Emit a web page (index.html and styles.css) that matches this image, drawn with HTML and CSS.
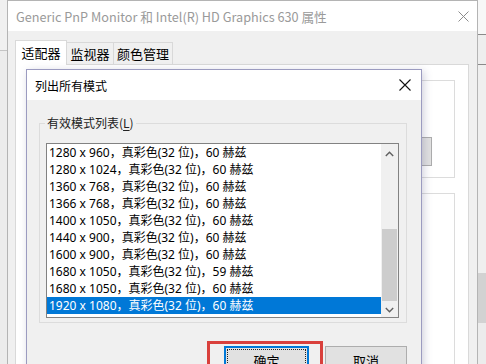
FILE: index.html
```html
<!DOCTYPE html>
<html lang="zh-CN">
<head>
  <meta charset="UTF-8" />
  <title>列出所有模式</title>
  <link rel="stylesheet" href="styles.css">
</head>
<body>

  <div class="side-left"></div>

  <div class="window">
    <div class="titlebar">
      <span class="title">Generic PnP Monitor 和 Intel(R) HD Graphics 630 属性</span>
      <svg class="close" width="11" height="11" viewBox="0 0 11 11"><path d="M0.5 0.5 L10.5 10.5 M10.5 0.5 L0.5 10.5" stroke="#8c8c8c" stroke-width="1" fill="none"/></svg>
    </div>
    <div class="winbody">
      <div class="tabs">
        <div class="tab active">适配器</div>
        <div class="tab">监视器</div>
        <div class="tab">颜色管理</div>
      </div>
      <div class="panel">
        <div class="pgroup g1"><div class="pbtn"></div></div>
        <div class="pgroup g2"></div>
      </div>
    </div>
  </div>

  <div class="side-right"></div>

  <!-- modal dialog on top of the properties window -->
  <div class="dialog">
    <div class="dlg-title">
      <span>列出所有模式</span>
      <svg class="close" width="12" height="12" viewBox="0 0 12 12"><path d="M0.5 0.5 L11.5 11.5 M11.5 0.5 L0.5 11.5" stroke="#111" stroke-width="1.1" fill="none"/></svg>
    </div>
    <div class="dlg-body">
      <div class="group">
        <span class="group-label">有效模式列表(<u>L</u>)</span>
        <div class="listbox">
          <ul class="items">
            <li>1280 x 960，真彩色(32 位)，60 赫兹</li>
            <li>1280 x 1024，真彩色(32 位)，60 赫兹</li>
            <li>1360 x 768，真彩色(32 位)，60 赫兹</li>
            <li>1366 x 768，真彩色(32 位)，60 赫兹</li>
            <li>1400 x 1050，真彩色(32 位)，60 赫兹</li>
            <li>1440 x 900，真彩色(32 位)，60 赫兹</li>
            <li>1600 x 900，真彩色(32 位)，60 赫兹</li>
            <li>1680 x 1050，真彩色(32 位)，59 赫兹</li>
            <li>1680 x 1050，真彩色(32 位)，60 赫兹</li>
            <li class="selected">1920 x 1080，真彩色(32 位)，60 赫兹</li>
          </ul>
          <div class="scrollbar">
            <svg class="arrow up" width="9" height="6" viewBox="0 0 9 6"><path d="M0.8 5 L4.5 1.3 L8.2 5" stroke="#606060" stroke-width="1.4" fill="none"/></svg>
            <div class="track"><div class="thumb"></div></div>
            <svg class="arrow down" width="9" height="6" viewBox="0 0 9 6"><path d="M0.8 1 L4.5 4.7 L8.2 1" stroke="#606060" stroke-width="1.4" fill="none"/></svg>
          </div>
        </div>
      </div>
      <div class="buttons">
        <div class="btn default">
          <span class="focus">确定</span>
          <div class="mark"></div>
        </div>
        <div class="btn">取消</div>
      </div>
    </div>
  </div>

</body>
</html>
```

FILE: styles.css
```css
body {
  margin: 0;
  width: 486px;
  height: 364px;
  overflow: hidden;
  position: relative;
  display: flex;
  background: #f0f0f0;
  font-family: "Noto Sans CJK SC", "Noto Sans", sans-serif;
  color: #000;
}
.side-left {
  width: 7px;
  flex: none;
  background: linear-gradient(#f0f0f0 0 50px, #c4c4c4 50px 51px, #ececec 51px);
}
.side-right {
  flex: 1;
  background: linear-gradient(#f7f7f7 0 34px, #8a8a8a 34px 35px, #eeeeee 35px 64px, #8a8a8a 64px 65px, #efefef 65px 273px, #d2d2d2 273px 323px, #ececec 323px);
}
.window {
  width: 471px;
  flex: none;
  box-sizing: border-box;
  border: 1px solid #b4b4b4;
  border-bottom: none;
  background: #f0f0f0;
  display: flex;
  flex-direction: column;
}
.titlebar {
  height: 30px;
  background: #fff;
  display: flex;
  align-items: center;
  justify-content: space-between;
  padding: 0 8px;
}
.title {
  font-size: 12.7px;
  color: #9a9a9a;
  white-space: nowrap;
}
.winbody {
  flex: 1;
  padding: 9px 8px 0 7px;
  display: flex;
  flex-direction: column;
}
.tabs {
  display: flex;
  align-items: flex-end;
  height: 25px;
  margin-bottom: -1px;
  position: relative;
  z-index: 1;
}
.tab {
  height: 23px;
  box-sizing: border-box;
  border: 1px solid #d9d9d9;
  border-left: none;
  background: #f0f0f0;
  font-size: 13px;
  line-height: 21px;
  width: 47px;
  text-align: center;
  white-space: nowrap;
}
.tab:last-child {
  width: 59px;
}
.tab.active {
  height: 25px;
  width: 52px;
  border-left: 1px solid #d9d9d9;
  border-bottom: none;
  background: #fff;
  line-height: 24px;
}
.panel {
  flex: 1;
  background: #fff;
  border: 1px solid #d9d9d9;
  border-bottom: none;
  padding: 15px 13px 0 12px;
  display: flex;
  flex-direction: column;
  gap: 15px;
}
.pgroup {
  border: 1px solid #dcdcdc;
}
.g1 {
  height: 96px;
  display: flex;
  justify-content: flex-end;
  align-items: flex-start;
}
.pbtn {
  width: 60px;
  height: 27px;
  margin: 56px 22px 0 0;
  background: #e1e1e1;
  border: 1px solid #adadad;
}
.g2 {
  flex: 1;
  border-bottom: none;
}

/* dialog */
.dialog {
  position: absolute;
  left: 26px;
  top: 69px;
  width: 396px;
  height: 310px;
  box-sizing: border-box;
  border: 1px solid #9b9bc0;
  background: #f0f0f0;
  box-shadow: 2px 2px 8px rgba(70, 70, 120, 0.25);
  z-index: 5;
  display: flex;
  flex-direction: column;
}
.dlg-title {
  height: 30px;
  background: #fff;
  display: flex;
  align-items: center;
  justify-content: space-between;
  padding: 0 10px 0 8px;
  font-size: 12px;
}
.dlg-body {
  padding: 23px 14px 0 12px;
}
.group {
  position: relative;
  border: 1px solid #dcdcdc;
  padding: 19px 7px 4px 6px;
}
.group-label {
  position: absolute;
  top: -10px;
  left: 5px;
  padding: 0 2px;
  background: #f0f0f0;
  font-size: 12px;
  line-height: 18px;
  color: #222;
}
.group-label u {
  text-decoration-thickness: 1px;
  text-underline-offset: 2px;
}
.listbox {
  display: flex;
  height: 173px;
  border: 1px solid #828282;
  background: #fff;
}
.items {
  flex: 1;
  list-style: none;
  margin: 0;
  padding: 0;
}
.items li {
  height: 17px;
  line-height: 17px;
  padding-left: 2px;
  font-family: "Noto Sans", "Noto Sans CJK SC", sans-serif;
  font-size: 12px;
  white-space: nowrap;
}
.items li.selected {
  background: #0078d7;
  color: #fff;
}
.scrollbar {
  width: 17px;
  background: #f0f0f0;
  display: flex;
  flex-direction: column;
  align-items: center;
}
.arrow.up {
  margin: 7px 0 6px;
}
.arrow.down {
  margin: 6px 0 4px;
}
.track {
  flex: 1;
  align-self: stretch;
  display: flex;
  flex-direction: column;
  justify-content: flex-end;
  padding: 0 1px;
}
.thumb {
  height: 72px;
  background: #cdcdcd;
}
.buttons {
  display: flex;
  justify-content: flex-end;
  gap: 16px;
  margin-top: 23px;
}
.btn {
  position: relative;
  width: 82px;
  height: 28px;
  box-sizing: border-box;
  border: 1px solid #adadad;
  background: #e1e1e1;
  font-size: 13px;
  display: flex;
  align-items: center;
  justify-content: center;
}
.btn.default {
  width: 85px;
  border: 2px solid #0078d7;
  padding: 1px;
}
.focus {
  flex: 1;
  align-self: stretch;
  border: 1px dotted #222;
  display: flex;
  align-items: center;
  justify-content: center;
}
.mark {
  position: absolute;
  left: -19px;
  top: -7px;
  width: 116px;
  height: 60px;
  border: 3px solid #d9403c;
  box-sizing: border-box;
}
```
